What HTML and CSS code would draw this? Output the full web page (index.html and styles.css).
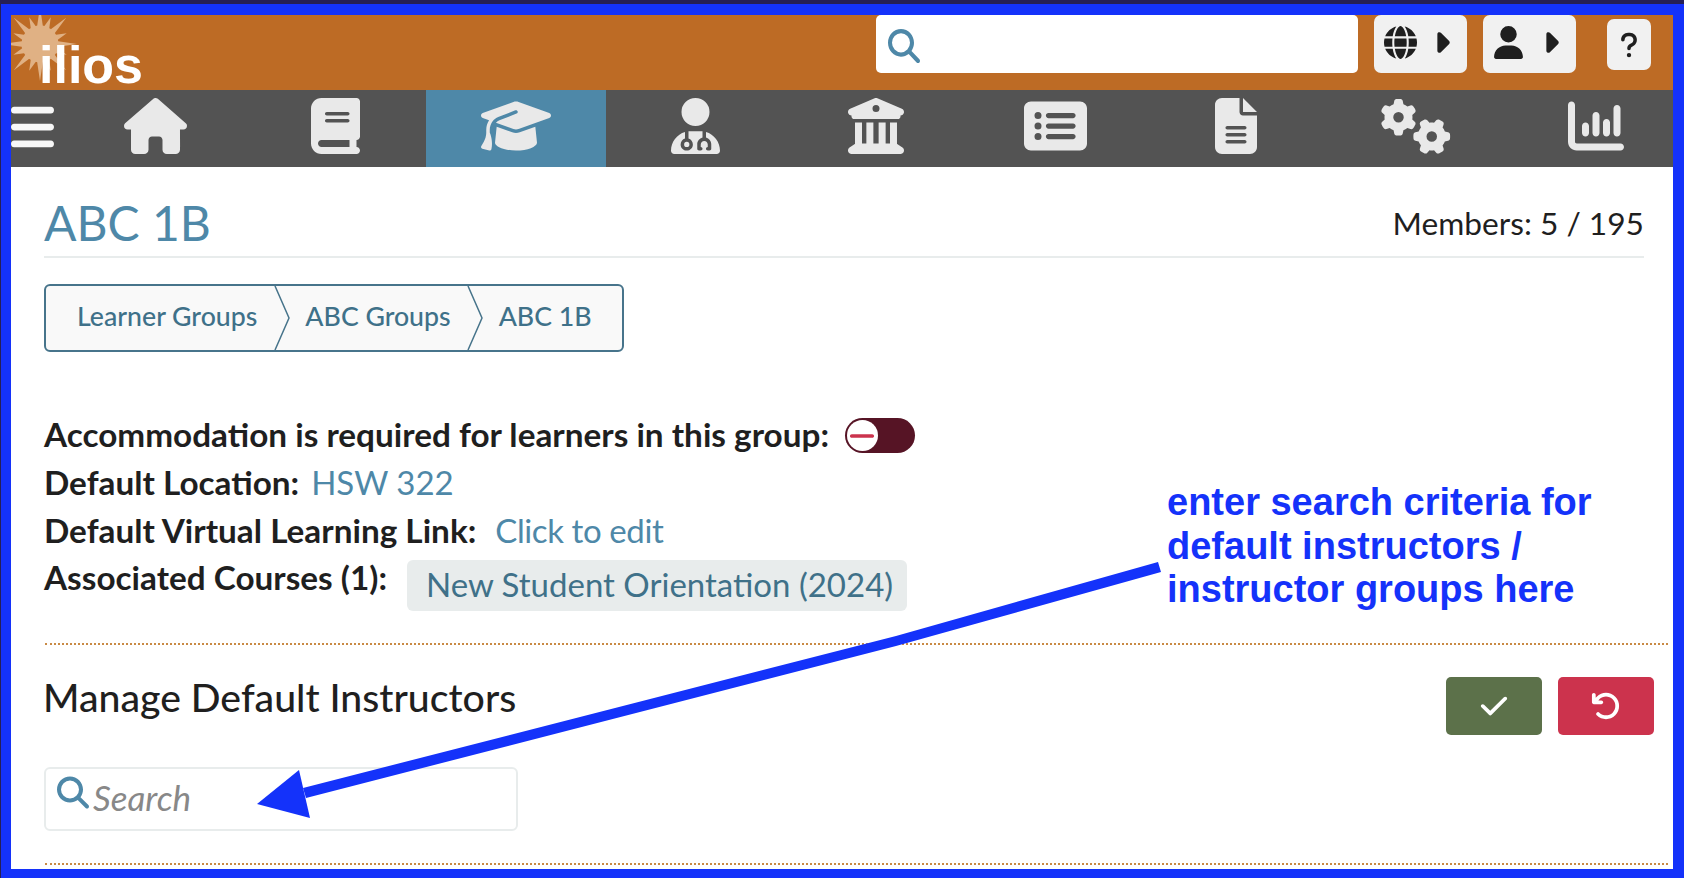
FILE: index.html
```html
<!DOCTYPE html>
<html lang="en">
<head>
  <meta charset="UTF-8">
  <title>ABC 1B</title>
  <link rel="stylesheet" href="styles.css">
</head>
<body>
<div class="frame">
  <header class="top-bar">
    <a class="logo" href="#">
      <svg class="logo-star" viewBox="0 0 72 72">
        <defs>
          <path id="ray-long" d="M33 20L36 0L39 20Z"/>
          <path id="ray-short" d="M33 20L36 8L39 20Z"/>
        </defs>
        <circle cx="36" cy="36" r="18"/>
        <use href="#ray-long"/>
        <use href="#ray-long" transform="rotate(45 36 36)"/>
        <use href="#ray-long" transform="rotate(90 36 36)"/>
        <use href="#ray-long" transform="rotate(135 36 36)"/>
        <use href="#ray-long" transform="rotate(180 36 36)"/>
        <use href="#ray-long" transform="rotate(225 36 36)"/>
        <use href="#ray-long" transform="rotate(270 36 36)"/>
        <use href="#ray-long" transform="rotate(315 36 36)"/>
        <use href="#ray-short" transform="rotate(22 36 36)"/>
        <use href="#ray-short" transform="rotate(68 36 36)"/>
        <use href="#ray-short" transform="rotate(112 36 36)"/>
        <use href="#ray-short" transform="rotate(158 36 36)"/>
        <use href="#ray-short" transform="rotate(202 36 36)"/>
        <use href="#ray-short" transform="rotate(248 36 36)"/>
        <use href="#ray-short" transform="rotate(292 36 36)"/>
        <use href="#ray-short" transform="rotate(338 36 36)"/>
      </svg>
      <span class="logo-text">ilios</span>
    </a>
    <div class="global-search">
      <svg class="search-icon" viewBox="0 0 512 512" preserveAspectRatio="none"><path d="M416 208c0 45.900-14.900 88.300-40 122.700L502.600 457.400c12.500 12.500 12.500 32.800 0 45.300s-32.800 12.500-45.300 0L330.700 376c-34.400 25.200-76.800 40-122.700 40C93.100 416 0 322.900 0 208S93.100 0 208 0S416 93.100 416 208zM208 352a144 144 0 1 0 0-288 144 144 0 1 0 0 288z"/></svg>
      <input type="text" aria-label="Search">
    </div>
    <button class="menu-btn" type="button">
      <svg class="menu-icon globe" viewBox="0 0 512 512"><path d="M352 256c0 22.200-1.200 43.600-3.300 64H163.300c-2.200-20.400-3.300-41.800-3.300-64s1.200-43.600 3.300-64H348.700c2.200 20.400 3.300 41.800 3.300 64zm28.800-64H503.900c5.300 20.500 8.100 41.900 8.100 64s-2.800 43.500-8.100 64H380.800c2.100-20.600 3.200-42 3.200-64s-1.100-43.400-3.200-64zm112.600-32H376.700c-10-63.900-29.800-117.400-55.300-151.600c78.300 20.700 142 77.500 172.100 151.600zm-149.100 0H167.700c6.100-36.400 15.500-68.600 27-94.700c10.500-23.600 22.200-40.700 33.500-51.500C239.400 3.200 248.700 0 256 0s16.600 3.200 27.800 13.800c11.300 10.800 23 27.900 33.500 51.500c11.600 26 20.900 58.200 27 94.700zm-209 0H18.600C48.600 85.900 112.200 29.100 190.600 8.400C165.100 42.600 145.300 96.100 135.300 160zM8.100 192H131.200c-2.100 20.600-3.200 42-3.200 64s1.100 43.400 3.200 64H8.100C2.800 299.500 0 278.100 0 256s2.800-43.500 8.100-64zM194.700 446.600c-11.600-26-20.900-58.200-27-94.600H344.300c-6.100 36.400-15.500 68.600-27 94.600c-10.500 23.600-22.200 40.700-33.500 51.500C272.600 508.800 263.300 512 256 512s-16.600-3.200-27.800-13.800c-11.300-10.800-23-27.900-33.500-51.500zM135.300 352c10 63.900 29.800 117.400 55.300 151.600C112.200 482.900 48.600 426.100 18.600 352H135.300zm358.100 0c-30 74.100-93.600 130.900-171.900 151.600c25.500-34.200 45.200-87.700 55.300-151.600H493.400z"/></svg>
      <svg class="caret-icon" viewBox="0 0 256 512"><path d="M246.600 278.600c12.500-12.500 12.500-32.800 0-45.300l-128-128c-9.200-9.200-22.900-11.900-34.900-6.900s-19.800 16.600-19.800 29.600l0 256c0 12.900 7.800 24.600 19.800 29.600s25.700 2.200 34.900-6.900l128-128z"/></svg>
    </button>
    <button class="menu-btn" type="button">
      <svg class="menu-icon user" viewBox="0 0 448 512"><path d="M224 256A128 128 0 1 0 224 0a128 128 0 1 0 0 256zm-45.700 48C79.800 304 0 383.800 0 482.300C0 498.700 13.300 512 29.700 512H418.300c16.400 0 29.700-13.300 29.700-29.700C448 383.800 368.200 304 269.700 304H178.300z"/></svg>
      <svg class="caret-icon" viewBox="0 0 256 512"><path d="M246.600 278.600c12.500-12.500 12.500-32.800 0-45.300l-128-128c-9.200-9.200-22.900-11.900-34.900-6.900s-19.800 16.600-19.800 29.600l0 256c0 12.900 7.800 24.600 19.800 29.600s25.700 2.200 34.900-6.900l128-128z"/></svg>
    </button>
    <button class="help-btn" type="button">
      <svg class="help-icon" viewBox="0 0 320 512"><path d="M80 160c0-35.300 28.700-64 64-64h32c35.300 0 64 28.700 64 64v3.600c0 21.800-11.100 42.100-29.400 53.800l-42.200 27.100c-25.200 16.200-40.400 44.100-40.400 74V320c0 17.700 14.300 32 32 32s32-14.300 32-32v-1.400c0-8.200 4.200-15.800 11-20.200l42.200-27.100c36.600-23.600 58.800-64.100 58.800-107.700V160c0-70.700-57.300-128-128-128H144C73.300 32 16 89.300 16 160c0 17.700 14.300 32 32 32s32-14.300 32-32zm80 320a40 40 0 1 0 0-80 40 40 0 1 0 0 80z"/></svg>
    </button>
  </header>

  <nav class="main-nav">
    <div class="nav-toggle">
      <svg viewBox="0 0 448 512" preserveAspectRatio="none"><path d="M0 96C0 78.300 14.300 64 32 64H416c17.700 0 32 14.300 32 32s-14.300 32-32 32H32C14.300 128 0 113.700 0 96zM0 256c0-17.700 14.300-32 32-32H416c17.700 0 32 14.300 32 32s-14.300 32-32 32H32c-17.700 0-32-14.300-32-32zM448 416c0 17.700-14.300 32-32 32H32c-17.700 0-32-14.300-32-32s14.300-32 32-32H416c17.700 0 32 14.300 32 32z"/></svg>
    </div>
    <a class="nav-item" href="#"><svg viewBox="0 0 576 512"><path d="M575.800 255.500c0 18-15 32.100-32 32.100h-32l.7 160.200c0 2.700-.2 5.400-.5 8.100V472c0 22.100-17.900 40-40 40H456c-1.100 0-2.200 0-3.300-.1c-1.400 .1-2.800 .1-4.200 .1H416 392c-22.100 0-40-17.900-40-40V448 384c0-17.700-14.300-32-32-32H256c-17.700 0-32 14.300-32 32v64 24c0 22.100-17.900 40-40 40H160 128.100c-1.500 0-3-.1-4.500-.2c-1.200 .1-2.400 .2-3.600 .2H104c-22.100 0-40-17.900-40-40V360c0-.9 0-1.900 .1-2.800V287.600H32c-18 0-32-14-32-32.100c0-9 3-17 10-24L266.400 8c7-7 15-8 22-8s15 2 21 7L564.800 231.500c8 7 12 15 11 24z"/></svg></a>
    <a class="nav-item" href="#"><svg viewBox="0 0 448 512"><path d="M96 0C43 0 0 43 0 96V416c0 53 43 96 96 96H384h32c17.700 0 32-14.300 32-32s-14.300-32-32-32V384c17.700 0 32-14.300 32-32V32c0-17.700-14.300-32-32-32H384 96zm0 384H352v64H96c-17.700 0-32-14.300-32-32s14.300-32 32-32zm32-240c0-8.800 7.200-16 16-16H336c8.800 0 16 7.200 16 16s-7.200 16-16 16H144c-8.800 0-16-7.200-16-16zm16 48H336c8.800 0 16 7.200 16 16s-7.200 16-16 16H144c-8.800 0-16-7.200-16-16s7.200-16 16-16z"/></svg></a>
    <a class="nav-item active" href="#"><svg viewBox="0 0 640 512"><path d="M320 32c-8.100 0-16.100 1.400-23.700 4.100L15.800 137.400C6.300 140.900 0 149.900 0 160s6.300 19.100 15.800 22.600l57.900 20.900C57.300 229.300 48 259.800 48 291.900v28.100c0 28.400-10.800 57.700-22.300 80.800c-6.500 13-13.900 25.800-22.500 37.600C0 442.700-.9 448.300 .9 453.400s6 8.900 11.200 10.200l64 16c4.200 1.100 8.700 .3 12.400-2s6.300-6.100 7.100-10.400c8.600-42.800 4.300-81.200-2.100-108.700C90.300 344.300 86 329.800 80 316.500V291.900c0-30.200 10.200-58.700 27.900-81.500c12.900-15.500 29.600-28 49.200-35.700l157-61.700c8.200-3.200 17.500 .8 20.700 9s-.8 17.500-9 20.700l-157 61.700c-12.400 4.900-23.300 12.400-32.200 21.600l159.600 57.600c7.600 2.700 15.600 4.100 23.700 4.100s16.100-1.400 23.700-4.100L624.200 182.600c9.500-3.400 15.800-12.500 15.800-22.600s-6.300-19.100-15.800-22.600L343.700 36.100C336.100 33.400 328.100 32 320 32zM128 408c0 35.300 86 72 192 72s192-36.700 192-72L496.700 262.600 354.500 314c-11.100 4-22.800 6-34.500 6s-23.500-2-34.500-6L143.300 262.600 128 408z"/></svg></a>
    <a class="nav-item" href="#"><svg viewBox="0 0 448 512"><path d="M224 256A128 128 0 1 0 224 0a128 128 0 1 0 0 256zm-96 55.200C54 332.900 0 401.300 0 482.300C0 498.700 13.300 512 29.700 512H418.300c16.400 0 29.700-13.300 29.700-29.700c0-81-54-149.400-128-171.100V362c27.600 7.100 48 32.200 48 62v40c0 8.800-7.200 16-16 16H336c-8.800 0-16-7.200-16-16s7.200-16 16-16V424c0-17.700-14.300-32-32-32s-32 14.300-32 32v24c8.800 0 16 7.200 16 16s-7.200 16-16 16H256c-8.800 0-16-7.200-16-16V424c0-29.800 20.400-54.900 48-62V304.900c-6-.6-12.100-.9-18.300-.9H178.300c-6.200 0-12.300 .3-18.300 .9v65.400c23.100 6.900 40 28.300 40 53.700c0 30.900-25.100 56-56 56s-56-25.100-56-56c0-25.400 16.900-46.800 40-53.700V311.200zM144 448a24 24 0 1 0 0-48 24 24 0 1 0 0 48z"/></svg></a>
    <a class="nav-item" href="#"><svg viewBox="0 0 512 512"><path d="M243.400 2.600l-224 96c-14 6-21.800 21-18.700 35.800S16.800 160 32 160v8c0 13.300 10.700 24 24 24H456c13.300 0 24-10.700 24-24v-8c15.200 0 28.300-10.700 31.300-25.600s-4.800-29.900-18.700-35.800l-224-96c-8-3.400-17.200-3.400-25.200 0zM128 224H64V420.300c-.6 .3-1.200 .7-1.800 1.100l-48 32c-11.700 7.800-17 22.400-12.900 35.900S17.900 512 32 512H480c14.100 0 26.500-9.200 30.600-22.700s-1.100-28.100-12.900-35.900l-48-32c-.6-.4-1.200-.7-1.800-1.100V224H384V416H344V224H280V416H232V224H168V416H128V224zM256 64a32 32 0 1 1 0 64 32 32 0 1 1 0-64z"/></svg></a>
    <a class="nav-item" href="#"><svg viewBox="0 0 576 512"><path d="M0 96C0 60.700 28.700 32 64 32H512c35.300 0 64 28.700 64 64V416c0 35.300-28.700 64-64 64H64c-35.300 0-64-28.700-64-64V96zM128 288a32 32 0 1 0 0-64 32 32 0 1 0 0 64zm32-128a32 32 0 1 0 -64 0 32 32 0 1 0 64 0zM128 384a32 32 0 1 0 0-64 32 32 0 1 0 0 64zm96-248c-13.300 0-24 10.700-24 24s10.700 24 24 24H448c13.300 0 24-10.700 24-24s-10.700-24-24-24H224zm0 96c-13.300 0-24 10.700-24 24s10.700 24 24 24H448c13.300 0 24-10.700 24-24s-10.700-24-24-24H224zm0 96c-13.300 0-24 10.700-24 24s10.700 24 24 24H448c13.300 0 24-10.700 24-24s-10.700-24-24-24H224z"/></svg></a>
    <a class="nav-item" href="#"><svg viewBox="0 0 384 512"><path d="M64 0C28.700 0 0 28.700 0 64V448c0 35.300 28.700 64 64 64H320c35.300 0 64-28.700 64-64V160H256c-17.700 0-32-14.300-32-32V0H64zM256 0V128H384L256 0zM112 256H272c8.800 0 16 7.200 16 16s-7.200 16-16 16H112c-8.800 0-16-7.200-16-16s7.200-16 16-16zm0 64H272c8.800 0 16 7.200 16 16s-7.200 16-16 16H112c-8.800 0-16-7.200-16-16s7.200-16 16-16zm0 64H272c8.800 0 16 7.200 16 16s-7.200 16-16 16H112c-8.800 0-16-7.200-16-16s7.200-16 16-16z"/></svg></a>
    <a class="nav-item" href="#"><svg viewBox="0 0 640 512"><path d="M308.500 135.300c7.100-6.300 9.900-16.200 6.200-25c-2.300-5.300-4.800-10.500-7.600-15.500L304 89.400c-3-5-6.300-9.900-9.800-14.600c-5.700-7.600-15.700-10.100-24.700-7.100l-28.200 9.300c-10.700-8.800-23-16-36.200-20.900L199 27.100c-1.900-9.300-9.100-16.700-18.500-17.800C173.900 8.400 167.200 8 160.400 8h-.7c-6.800 0-13.500 .4-20.100 1.200c-9.400 1.100-16.600 8.600-18.500 17.800L115 56.100c-13.300 5-25.500 12.100-36.200 20.900L50.500 67.800c-9-3-19-.5-24.700 7.100c-3.500 4.700-6.800 9.600-9.900 14.600l-3 5.300c-2.800 5-5.300 10.200-7.600 15.600c-3.700 8.700-.9 18.600 6.200 25l22.200 19.800C32.600 161.900 32 168.900 32 176s.6 14.100 1.700 20.900L11.500 216.700c-7.100 6.300-9.900 16.200-6.200 25c2.300 5.300 4.800 10.500 7.600 15.600l3 5.200c3 5.100 6.300 9.900 9.900 14.600c5.700 7.600 15.700 10.100 24.700 7.100l28.200-9.300c10.700 8.800 23 16 36.200 20.900l6.100 29.100c1.900 9.300 9.100 16.700 18.500 17.800c6.700 .8 13.500 1.200 20.400 1.200s13.700-.4 20.400-1.200c9.400-1.100 16.600-8.600 18.500-17.800l6.100-29.100c13.300-5 25.500-12.100 36.200-20.900l28.200 9.300c9 3 19 .5 24.700-7.100c3.500-4.700 6.800-9.500 9.800-14.600l3.100-5.400c2.800-5 5.300-10.200 7.600-15.500c3.700-8.700 .9-18.600-6.200-25l-22.200-19.800c1.100-6.800 1.700-13.800 1.700-20.900s-.6-14.100-1.700-20.900l22.200-19.800zM112 176a48 48 0 1 1 96 0 48 48 0 1 1 -96 0zM504.700 500.500c6.300 7.100 16.200 9.900 25 6.200c5.300-2.300 10.500-4.800 15.500-7.600l5.400-3.100c5-3 9.900-6.300 14.600-9.800c7.600-5.700 10.100-15.700 7.100-24.700l-9.300-28.200c8.800-10.700 16-23 20.900-36.200l29.100-6.100c9.300-1.900 16.700-9.100 17.800-18.500c.8-6.700 1.200-13.500 1.200-20.400s-.4-13.700-1.200-20.400c-1.100-9.400-8.600-16.600-17.800-18.500L583.900 307c-5-13.300-12.100-25.500-20.900-36.200l9.300-28.200c3-9 .5-19-7.100-24.700c-4.700-3.500-9.600-6.800-14.600-9.900l-5.300-3c-5-2.800-10.200-5.300-15.600-7.600c-8.700-3.700-18.600-.9-25 6.200l-19.800 22.200c-6.800-1.100-13.800-1.700-20.900-1.700s-14.100 .6-20.900 1.700l-19.800-22.200c-6.300-7.100-16.200-9.900-25-6.200c-5.300 2.300-10.500 4.800-15.600 7.600l-5.200 3c-5.100 3-9.900 6.300-14.600 9.900c-7.600 5.700-10.100 15.700-7.100 24.700l9.300 28.200c-8.800 10.700-16 23-20.900 36.200L315.100 313c-9.300 1.900-16.700 9.100-17.800 18.500c-.8 6.700-1.200 13.500-1.200 20.400s.4 13.700 1.200 20.400c1.100 9.400 8.600 16.600 17.800 18.500l29.100 6.100c5 13.300 12.100 25.500 20.900 36.200l-9.300 28.200c-3 9-.5 19 7.100 24.700c4.700 3.500 9.500 6.800 14.600 9.800l5.400 3.100c5 2.800 10.200 5.300 15.500 7.600c8.700 3.700 18.600 .9 25-6.200l19.800-22.200c6.800 1.100 13.800 1.700 20.900 1.700s14.100-.6 20.900-1.700l19.800 22.200zM464 304a48 48 0 1 1 0 96 48 48 0 1 1 0-96z"/></svg></a>
    <a class="nav-item" href="#"><svg viewBox="0 0 512 512"><path d="M32 32c17.700 0 32 14.300 32 32V400c0 8.800 7.200 16 16 16H480c17.700 0 32 14.300 32 32s-14.300 32-32 32H80c-44.200 0-80-35.800-80-80V64C0 46.300 14.300 32 32 32zM160 224c17.700 0 32 14.300 32 32v64c0 17.700-14.300 32-32 32s-32-14.300-32-32V256c0-17.700 14.300-32 32-32zm128-64V320c0 17.700-14.300 32-32 32s-32-14.300-32-32V160c0-17.700 14.300-32 32-32s32 14.300 32 32zm64 32c17.700 0 32 14.300 32 32v96c0 17.700-14.300 32-32 32s-32-14.300-32-32V224c0-17.700 14.300-32 32-32zM480 96V320c0 17.700-14.300 32-32 32s-32-14.300-32-32V96c0-17.700 14.300-32 32-32s32 14.300 32 32z"/></svg></a>
  </nav>

  <main class="content">
    <div class="title-row">
      <h1 class="group-title">ABC 1B</h1>
      <span class="members">Members: 5 / 195</span>
    </div>

    <div class="breadcrumbs">
      <a class="crumb first" href="#">Learner Groups</a>
      <svg class="crumb-sep" viewBox="0 0 16 64" preserveAspectRatio="none"><path d="M1 0L15 32L1 64"/></svg>
      <a class="crumb" href="#">ABC Groups</a>
      <svg class="crumb-sep" viewBox="0 0 16 64" preserveAspectRatio="none"><path d="M1 0L15 32L1 64"/></svg>
      <span class="crumb last">ABC 1B</span>
    </div>

    <div class="details">
      <div class="detail-row">
        <span class="label">Accommodation is required for learners in this group:</span>
        <span class="toggle">
          <span class="toggle-knob">
            <svg viewBox="0 0 448 512"><path d="M432 256c0 17.700-14.300 32-32 32H48c-17.700 0-32-14.300-32-32s14.300-32 32-32H400c17.700 0 32 14.300 32 32z"/></svg>
          </span>
        </span>
      </div>
      <div class="detail-row">
        <span class="label">Default Location:</span>
        <a class="edit-link location" href="#">HSW 322</a>
      </div>
      <div class="detail-row">
        <span class="label">Default Virtual Learning Link:</span>
        <a class="edit-link virtual" href="#">Click to edit</a>
      </div>
      <div class="detail-row courses-row">
        <span class="label">Associated Courses (1):</span>
        <a class="course-chip" href="#">New Student Orientation (2024)</a>
      </div>
    </div>

    <section class="manage">
      <div class="manage-head">
        <h2 class="manage-title">Manage Default Instructors</h2>
        <div class="manage-actions">
          <button class="action-btn save" type="button">
            <svg viewBox="0 0 448 512"><path d="M438.600 105.400c12.500 12.500 12.500 32.800 0 45.300l-256 256c-12.500 12.500-32.800 12.500-45.300 0l-128-128c-12.500-12.500-12.500-32.800 0-45.300s32.800-12.500 45.300 0L160 338.700 393.400 105.400c12.500-12.500 32.800-12.500 45.300 0z"/></svg>
          </button>
          <button class="action-btn cancel" type="button">
            <svg viewBox="0 0 512 512"><path d="M125.700 160H176c17.700 0 32 14.300 32 32s-14.300 32-32 32H48c-17.700 0-32-14.300-32-32V64c0-17.700 14.300-32 32-32s32 14.300 32 32v51.200L97.600 97.600c87.500-87.500 229.300-87.500 316.800 0s87.500 229.300 0 316.800s-229.300 87.500-316.800 0c-12.500-12.500-12.500-32.800 0-45.300s32.800-12.500 45.300 0c62.500 62.500 163.800 62.500 226.300 0s62.500-163.800 0-226.300s-163.800-62.500-226.300 0L125.700 160z"/></svg>
          </button>
        </div>
      </div>
      <div class="instructor-search">
        <svg class="search-icon" viewBox="0 0 512 512"><path d="M416 208c0 45.900-14.900 88.300-40 122.700L502.600 457.400c12.500 12.500 12.500 32.800 0 45.300s-32.800 12.500-45.300 0L330.700 376c-34.400 25.200-76.800 40-122.700 40C93.100 416 0 322.900 0 208S93.100 0 208 0S416 93.100 416 208zM208 352a144 144 0 1 0 0-288 144 144 0 1 0 0 288z"/></svg>
        <input type="text" placeholder="Search">
      </div>
    </section>
    <div class="manage-end"></div>
  </main>

  <!-- annotation drawn over the screenshot -->
  <svg class="annotation-arrow" viewBox="0 0 1662 854">
    <path d="M292 773L885 621L1147 547L1150 557L885 631L295 783Z"/>
    <path d="M246 789L288 755L299 803Z"/>
  </svg>
  <p class="annotation-text">enter search criteria for<br>default instructors /<br>instructor groups here</p>
</div>
</body>
</html>
```

FILE: styles.css
```css
* {
  box-sizing: border-box;
  margin: 0;
  padding: 0;
}
html, body {
  height: 100%;
  overflow: hidden;
}
body {
  background-color: #261f55;
  padding: 4px 0 0 1px;
  font-family: "Lato", "Noto Sans", sans-serif;
  color: #1f1f1f;
}
a {
  text-decoration: none;
}
button {
  border: 0;
  cursor: pointer;
}
svg {
  display: block;
  fill: currentColor;
}
.frame {
  position: relative;
  height: 874px;
  border: solid #1432fa;
  border-width: 11px 11px 9px 10px;
  background-color: #fff;
  overflow: hidden;
}

/* top bar */
.top-bar {
  display: flex;
  align-items: flex-start;
  height: 75px;
  background-color: #bd6b25;
}
.logo {
  position: relative;
  width: 865px;
  height: 75px;
  display: block;
}
.logo-star {
  position: absolute;
  left: -8px;
  top: -8px;
  width: 74px;
  height: 74px;
  fill: #e0b184;
}
.logo-text {
  position: absolute;
  left: 28px;
  top: 22px;
  font-family: "Liberation Sans", Arial, sans-serif;
  font-weight: 700;
  font-size: 52px;
  line-height: 56px;
  color: #fff;
}
.global-search {
  display: flex;
  align-items: center;
  width: 482px;
  height: 58px;
  padding: 0 0 1px 12px;
  background-color: #fff;
  border-radius: 5px;
}
.global-search .search-icon {
  width: 32px;
  height: 34px;
  margin-top: 4px;
  color: #4e88a8;
  flex: none;
}
.global-search input {
  flex: 1;
  height: 100%;
  border: 0;
  outline: 0;
  background: none;
}
.menu-btn {
  display: flex;
  align-items: center;
  justify-content: space-between;
  width: 93px;
  height: 58px;
  margin-left: 16px;
  padding: 0 17px 4px 10px;
  background-color: #f1f1f1;
  border-radius: 7px;
  color: #1f1f1f;
}
.menu-icon {
  height: 33px;
}
.menu-icon.globe {
  width: 33px;
}
.menu-icon.user {
  width: 31px;
}
.caret-icon {
  width: 17px;
  height: 33px;
}
.help-btn {
  display: flex;
  align-items: center;
  justify-content: center;
  width: 44px;
  height: 51px;
  margin: 4px 0 0 31px;
  background-color: #f1f1f1;
  border-radius: 7px;
  color: #1f1f1f;
}
.help-icon {
  width: 18px;
  height: 28px;
}

/* main nav */
.main-nav {
  display: flex;
  height: 77px;
  background-color: #535353;
}
.nav-toggle {
  width: 55px;
  flex: none;
  padding-top: 10px;
  color: #f7f7f7;
}
.nav-toggle svg {
  width: 43px;
  height: 54px;
}
.nav-item {
  display: flex;
  justify-content: center;
  width: 180px;
  flex: none;
  padding: 8px 1px 0 0;
  color: #e9e9e9;
}
.nav-item svg {
  height: 56px;
}
.nav-item.active {
  background-color: #4e88a8;
}

/* page content */
.content {
  padding: 0 5px 0 33px;
}
.title-row {
  display: flex;
  align-items: center;
  justify-content: space-between;
  height: 91px;
  padding: 24px 0 1px;
  margin-right: 24px;
  border-bottom: 2px solid #e8ecec;
}
.group-title {
  font-size: 48px;
  font-weight: 400;
  line-height: 60px;
  color: #4e88a8;
}
.members {
  font-size: 31.700px;
}
.breadcrumbs {
  display: inline-flex;
  height: 68px;
  margin-top: 26px;
  background-color: #f9f9f9;
  border: 2px solid #47748b;
  border-radius: 6px;
  vertical-align: top;
}
.crumb {
  display: flex;
  align-items: center;
  padding: 0 16px 4px 15px;
  font-size: 26.700px;
  font-weight: 500;
  color: #3f7189;
}
.crumb.first {
  padding: 0 17px 4px 31px;
}
.crumb.last {
  padding: 0 30px 4px 16px;
}
.crumb-sep {
  width: 16px;
  height: 100%;
  flex: none;
  fill: none;
  stroke: #47748b;
  stroke-width: 1.500;
}
.details {
  margin-top: 58px;
  margin-right: 24px;
  font-size: 33px;
}
.detail-row {
  display: flex;
  align-items: center;
  height: 48px;
}
.label {
  font-weight: 700;
  font-size: 33.300px;
  line-height: 48px;
}
.edit-link {
  color: #4e88a8;
}
.edit-link.location {
  margin-left: 12px;
}
.edit-link.virtual {
  margin-left: 19px;
  letter-spacing: -.4px;
}
.toggle {
  display: flex;
  align-items: center;
  width: 70px;
  height: 35px;
  margin: 3px 0 0 16px;
  background-color: #561425;
  border-radius: 18px;
  padding-left: 2px;
}
.toggle-knob {
  display: flex;
  align-items: center;
  justify-content: center;
  width: 31px;
  height: 31px;
  background-color: #fff;
  border-radius: 50%;
  color: #cb334d;
}
.toggle-knob svg {
  width: 26px;
  height: 30px;
}
.courses-row {
  align-items: flex-start;
  height: 55px;
}
.courses-row .label {
  line-height: 46px;
}
.course-chip {
  display: flex;
  align-items: center;
  height: 51px;
  margin: 6px 0 0 20px;
  padding: 0 14px 4px 19px;
  background-color: #e8ecec;
  border-radius: 6px;
  color: #3f7189;
}
.manage {
  margin: 34px 0 0 1px;
  padding: 32px 14px 0 0;
  border-top: 2px dotted #c98a45;
}
.manage-head {
  display: flex;
  align-items: flex-start;
  justify-content: space-between;
}
.manage-title {
  margin-left: -2px;
  font-size: 39.200px;
  font-weight: 500;
  line-height: 40px;
}
.manage-actions {
  display: flex;
  gap: 16px;
}
.action-btn {
  display: flex;
  align-items: center;
  justify-content: center;
  width: 96px;
  height: 58px;
  border-radius: 5px;
  color: #fff;
}
.action-btn svg {
  width: 30px;
  height: 30px;
}
.save {
  background-color: #5c714a;
}
.cancel {
  background-color: #cc334d;
}
.instructor-search {
  display: flex;
  align-items: flex-start;
  width: 474px;
  height: 64px;
  margin: 32px 0 0 -1px;
  padding: 7px 0 0 11px;
  border: 2px solid #e8ecec;
  border-radius: 6px;
}
.instructor-search .search-icon {
  width: 32px;
  height: 33px;
  flex: none;
  color: #4e88a8;
}
.instructor-search input {
  flex: 1;
  min-width: 0;
  height: 44px;
  margin: -1px 0 0 4px;
  border: 0;
  outline: 0;
  background: none;
  font-family: inherit;
  font-size: 35px;
  font-style: italic;
}
.instructor-search input::placeholder {
  color: #888;
  opacity: 1;
}
.manage-end {
  margin: 32px 0 0 1px;
  border-top: 2px dotted #c98a45;
}

/* annotation layer */
.annotation-arrow {
  position: absolute;
  left: 0;
  top: 0;
  width: 1662px;
  height: 854px;
  fill: #1432fa;
  pointer-events: none;
}
.annotation-text {
  position: absolute;
  left: 1156px;
  top: 466px;
  font-family: "Liberation Sans", Arial, sans-serif;
  font-size: 38px;
  font-weight: 700;
  line-height: 43.500px;
  color: #1432fa;
}
```
